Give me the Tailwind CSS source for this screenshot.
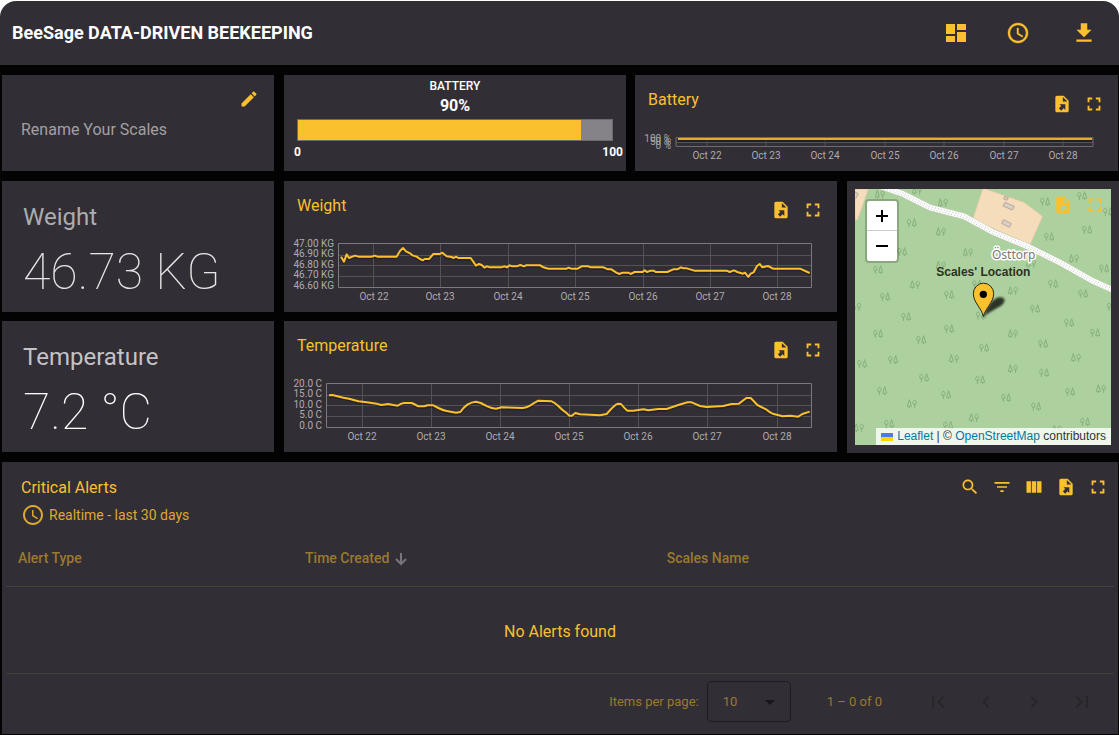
<!DOCTYPE html>
<html lang="en">
<head>
<meta charset="utf-8">
<meta name="viewport" content="width=device-width, initial-scale=1">
<title>BeeSage</title>
<script src="https://cdn.jsdelivr.net/npm/@tailwindcss/browser@4"></script>
</head>
<body class="bg-[#030303] font-['Roboto',sans-serif] text-white">
<svg class="hidden" aria-hidden="true">
  <symbol id="file" viewBox="0 0 24 24"><path d="M6,2C4.89,2 4,2.9 4,4V20A2,2 0 0,0 6,22H18A2,2 0 0,0 20,20V8L14,2M13,3.5L18.5,9H13M8.93,12.22H16V19.29L13.88,17.17L11.05,20L8.22,17.17L11.05,14.35"/></symbol>
  <symbol id="full" viewBox="0 0 24 24"><path d="M7 14H5v5h5v-2H7v-3zm-2-4h2V7h3V5H5v5zm12 7h-3v2h5v-5h-2v3zM14 5v2h3v3h2V5h-5z"/></symbol>
  <symbol id="clock" viewBox="0 0 24 24"><path d="M11.99 2C6.47 2 2 6.48 2 12s4.47 10 9.99 10C17.52 22 22 17.52 22 12S17.52 2 11.99 2zM12 20c-4.42 0-8-3.58-8-8s3.58-8 8-8 8 3.58 8 8-3.58 8-8 8zm.5-13H11v6l5.250 3.150.75-1.230-4.500-2.670z"/></symbol>
  <defs>
    <path id="ta" d="M-8 13V0M-8 4a5 7 0 1 1 .1 0M8 13V8M2 8 8-12 14 8Z"/>
    <path id="tb" d="M8 13V0M8 4a5 7 0 1 1 .1 0M-8 13V8M-14 8-8-12-2 8Z"/>
  </defs>
</svg>

<header class="bg-white pt-px">
  <div class="flex h-16 items-center justify-between rounded-t-2xl bg-[#322e35] pr-[15px] pl-3">
    <h1 class="text-lg font-bold">BeeSage DATA-DRIVEN BEEKEEPING</h1>
    <div class="flex items-center text-[#fbc02d]">
      <button type="button" aria-label="Dashboards" class="mr-[22px] grid size-10 place-items-center"><svg class="size-6 fill-current" viewBox="0 0 24 24"><path d="M2 13h9V3H2v10zm0 8h9v-6H2v6zm11 0h9V11h-9v10zm0-18v6h9V3h-9z"/></svg></button>
      <button type="button" aria-label="Time window" class="mr-[26px] grid size-10 place-items-center"><svg class="size-6 fill-current stroke-current" stroke-width=".4"><use href="#clock"/></svg></button>
      <button type="button" aria-label="Download" class="grid size-10 place-items-center"><svg class="size-[26px] fill-current" viewBox="0 0 24 24"><path d="M19 9h-4V3H9v6H5l7 7 7-7zM5 18v2h14v-2H5z"/></svg></button>
    </div>
  </div>
</header>

<main class="flex flex-col gap-[10px] pt-[10px] pl-[2px]">
  <div class="mr-px grid grid-cols-[272fr_342fr_482fr] gap-[10px]">
    <section class="flex min-h-24 flex-col bg-[#322e35] px-[19px]">
      <button type="button" aria-label="Rename" class="mt-[14px] -mr-[4px] self-end p-0 text-[#fbc02d]"><svg class="size-5 fill-current" viewBox="0 0 24 24"><path d="M3 17.250V21h3.750L17.810 9.940l-3.750-3.750L3 17.250zM20.710 7.040c.39-.39.39-1.020 0-1.410l-2.340-2.340c-.39-.39-1.020-.39-1.410 0l-1.830 1.830 3.750 3.750 1.830-1.830z"/></svg></button>
      <p class="mt-[9px] text-base leading-6 text-[#a1a0a2]">Rename Your Scales</p>
    </section>
    <section class="bg-[#322e35] px-[13px] pt-[3px] text-center">
      <h2 class="text-xs leading-4 font-medium">BATTERY</h2>
      <p class="text-base leading-6 font-bold">90%</p>
      <div class="mt-px h-[22px] border border-[#6c6a6e] bg-[#858387]"><div class="h-full bg-[#fbc02d]" style="width:90%"></div></div>
      <div class="-mx-[10px] mt-[3px] flex justify-between pl-[7px] text-xs leading-4 font-bold"><span>0</span><span>100</span></div>
    </section>
    <section class="-ml-px bg-[#322e35]">
      <div class="flex h-[50px] justify-between pr-2 pl-[13px] text-[#fbc02d]">
        <h2 class="mt-[13px] text-base leading-6">Battery</h2>
        <div class="mt-[13px] flex">
          <button type="button" aria-label="Export" class="grid size-8 place-items-center"><svg class="size-5 fill-current"><use href="#file"/></svg></button>
          <button type="button" aria-label="Fullscreen" class="grid size-8 place-items-center"><svg class="size-[22px] fill-current"><use href="#full"/></svg></button>
        </div>
      </div>
      <svg class="block w-full text-[10px]" viewBox="0 0 483 45">
        <path fill="none" stroke="#545157" d="M72 13v9M131 13v9M190 13v9M250 13v9M309 13v9M369 13v9M428 13v9M41 17.500H458"/>
        <path fill="none" stroke="#6d6b70" d="M41 12.500H458V21.500H41Z"/>
        <path fill="none" stroke="#000" stroke-opacity=".3" stroke-width="2" d="M43 16H457"/>
        <path fill="none" stroke="#e0ad30" stroke-width="2" d="M43 14H457"/>
        <g fill="#a4a3a5" text-anchor="end"><text x="36" y="17">100 %</text><text x="36" y="20">50 %</text><text x="36" y="24">0 %</text></g>
        <g fill="#adacae" text-anchor="middle"><text x="72" y="34">Oct 22</text><text x="131" y="34">Oct 23</text><text x="190" y="34">Oct 24</text><text x="250" y="34">Oct 25</text><text x="309" y="34">Oct 26</text><text x="369" y="34">Oct 27</text><text x="428" y="34">Oct 28</text></g>
      </svg>
    </section>
  </div>

  <div class="grid grid-cols-[272fr_553fr_272fr] items-start gap-[10px]">
    <div class="flex flex-col gap-[9px]">
      <section class="min-h-[131px] bg-[#322e35] px-[21px] pt-5">
        <h2 class="text-2xl leading-8 text-[#adacae]">Weight</h2>
        <p class="mt-[9px] text-[50px] leading-[60px] font-thin text-[#e6e6e6]">46.73 KG</p>
      </section>
      <section class="min-h-[131px] bg-[#322e35] px-[21px] pt-5">
        <h2 class="text-2xl leading-8 text-[#c4c3c5]">Temperature</h2>
        <p class="mt-[9px] text-[50px] leading-[60px] font-thin">7.2 °C</p>
      </section>
    </div>

    <div class="flex flex-col gap-[9px]">
      <section class="bg-[#322e35]">
        <div class="flex h-[50px] justify-between pr-2 pl-[13px] text-[#fbc02d]">
          <h2 class="mt-[13px] text-base leading-6">Weight</h2>
          <div class="mt-[13px] flex">
            <button type="button" aria-label="Export" class="grid size-8 place-items-center"><svg class="size-5 fill-current"><use href="#file"/></svg></button>
            <button type="button" aria-label="Fullscreen" class="grid size-8 place-items-center"><svg class="size-[22px] fill-current"><use href="#full"/></svg></button>
          </div>
        </div>
        <svg class="block w-full text-[10px]" viewBox="0 0 553 81">
          <path fill="none" stroke="#545157" d="M54 24.500H528M54 34.500H528M54 45.500H528M89.500 12V56M156.500 12V56M224.500 12V56M291.500 12V56M359.500 12V56M426.500 12V56M493.500 12V56"/>
          <path fill="none" stroke="#7b797e" d="M54.500 12.500H527.500V56.500H54.500Z"/>
          <defs><path id="wl" d="M183 242L192 257L200 235L207 246L225 239L235 242H276L284 239L292 242H350L360 225L369 216L378 226L390 232L397 238L410 242L420 249L428 253L434 249H447L460 234H480L487 230L500 241L515 243L521 246L528 242L535 246H572L588 269L597 264L605 267L613 275L621 271L629 274H664L673 271L681 274L689 268L697 271H710L721 267L732 271L738 268H781L790 274L805 278H860L866 275L873 278H893L905 271H925L932 274H970L984 280H994L1009 290L1018 294L1028 290H1045L1052 294L1064 288H1088L1094 283L1101 288L1112 284H1121L1127 288H1162L1180 280H1192L1203 274L1210 277H1220L1243 284H1340L1349 288L1362 283L1372 288L1389 293L1395 290L1405 303L1412 293L1421 289L1431 270L1439 264L1447 274L1464 270L1479 278H1560L1589 291"/></defs>
          <g transform="translate(-4 -55) scale(.33333)" fill="none" stroke-linejoin="round" stroke-width="6">
            <use href="#wl" y="5" stroke="#000" stroke-opacity=".25"/><use href="#wl" stroke="#fbc02d"/>
          </g>
          <g fill="#adacae" text-anchor="end"><text x="50" y="16">47.00 KG</text><text x="50" y="26">46.90 KG</text><text x="50" y="37">46.80 KG</text><text x="50" y="47">46.70 KG</text><text x="50" y="58">46.60 KG</text></g>
          <g fill="#adacae" text-anchor="middle"><text x="90" y="69">Oct 22</text><text x="156" y="69">Oct 23</text><text x="224" y="69">Oct 24</text><text x="291" y="69">Oct 25</text><text x="359" y="69">Oct 26</text><text x="426" y="69">Oct 27</text><text x="493" y="69">Oct 28</text></g>
        </svg>
      </section>
      <section class="bg-[#322e35]">
        <div class="flex h-[50px] justify-between pr-2 pl-[13px] text-[#fbc02d]">
          <h2 class="mt-[13px] text-base leading-6">Temperature</h2>
          <div class="mt-[13px] flex">
            <button type="button" aria-label="Export" class="grid size-8 place-items-center"><svg class="size-5 fill-current"><use href="#file"/></svg></button>
            <button type="button" aria-label="Fullscreen" class="grid size-8 place-items-center"><svg class="size-[22px] fill-current"><use href="#full"/></svg></button>
          </div>
        </div>
        <svg class="block w-full text-[10px]" viewBox="0 0 553 81">
          <path fill="none" stroke="#545157" d="M43 24.500H528M43 34.500H528M43 45.500H528M78.500 12V56M147.500 12V56M216.500 12V56M285.500 12V56M354.500 12V56M423.500 12V56M493.500 12V56"/>
          <path fill="none" stroke="#7b797e" d="M42.500 12.500H527.500V56.500H42.500Z"/>
          <defs><path id="tl" d="M147 238L157 237L190 245L207 248L235 256L260 259L290 263L303 267L325 264L340 267L353 269Q362 262 372 261H395Q405 265 415 271L432 271L443 268H460L475 276Q488 283 500 285L528 290L541 288Q550 275 562 266Q575 258 588 257L602 261L622 271Q635 277 648 278L665 274L728 276Q740 275 750 269Q764 260 775 254L815 256Q825 260 835 270Q846 282 857 289L868 299H876L886 291L900 295L960 298L980 294Q992 280 1002 271Q1008 264 1014 263L1023 264Q1032 276 1042 284L1060 284L1090 280L1105 283L1135 279H1160L1195 267L1223 259H1235L1260 270L1280 273L1330 270L1355 264L1377 263L1399 246H1412Q1422 256 1432 267L1458 280Q1468 289 1478 293L1508 301L1530 299L1555 302L1567 294L1589 287"/></defs>
          <g transform="translate(-4 -55) scale(.33333)" fill="none" stroke-linejoin="round" stroke-width="6">
            <use href="#tl" y="5" stroke="#000" stroke-opacity=".25"/><use href="#tl" stroke="#fbc02d"/>
          </g>
          <g fill="#adacae" text-anchor="end"><text x="38" y="16">20.0 C</text><text x="38" y="26">15.0 C</text><text x="38" y="37">10.0 C</text><text x="38" y="47">5.0 C</text><text x="38" y="58">0.0 C</text></g>
          <g fill="#adacae" text-anchor="middle"><text x="78" y="69">Oct 22</text><text x="147" y="69">Oct 23</text><text x="216" y="69">Oct 24</text><text x="285" y="69">Oct 25</text><text x="354" y="69">Oct 26</text><text x="423" y="69">Oct 27</text><text x="493" y="69">Oct 28</text></g>
        </svg>
      </section>
    </div>

    <section class="relative bg-[#322e35] p-2 font-['Liberation_Sans',sans-serif]" aria-label="Map">
      <svg class="block w-full" viewBox="36 39 768 768">
        <path fill="#add19e" d="M36 39h768v768H36z"/>
        <g fill="none" stroke="#86b07c" stroke-width="3">
          <use href="#tb" x="111" y="55"/><use href="#tb" x="222" y="43"/><use href="#tb" x="300" y="80"/><use href="#ta" x="206" y="140"/><use href="#tb" x="294" y="167"/><use href="#ta" x="177" y="227"/><use href="#tb" x="375" y="229"/><use href="#ta" x="606" y="77"/><use href="#ta" x="717" y="59"/><use href="#ta" x="732" y="161"/><use href="#ta" x="618" y="182"/><use href="#tb" x="693" y="248"/><use href="#ta" x="783" y="277"/><use href="#ta" x="795" y="107"/><use href="#ta" x="630" y="323"/><use href="#ta" x="720" y="353"/><use href="#tb" x="510" y="344"/><use href="#tb" x="216" y="326"/><use href="#ta" x="105" y="281"/><use href="#tb" x="294" y="268"/><use href="#ta" x="318" y="356"/><use href="#ta" x="126" y="362"/><use href="#tb" x="40" y="392"/><use href="#ta" x="189" y="422"/><use href="#ta" x="576" y="398"/><use href="#ta" x="678" y="440"/><use href="#ta" x="756" y="470"/><use href="#ta" x="105" y="473"/><use href="#ta" x="318" y="458"/><use href="#ta" x="234" y="491"/><use href="#tb" x="510" y="473"/><use href="#ta" x="600" y="503"/><use href="#ta" x="423" y="515"/><use href="#ta" x="150" y="551"/><use href="#tb" x="333" y="548"/><use href="#ta" x="57" y="563"/><use href="#tb" x="699" y="545"/><use href="#tb" x="510" y="578"/><use href="#ta" x="603" y="590"/><use href="#ta" x="243" y="605"/><use href="#ta" x="411" y="611"/><use href="#ta" x="117" y="644"/><use href="#ta" x="309" y="656"/><use href="#tb" x="774" y="638"/><use href="#ta" x="681" y="647"/><use href="#ta" x="489" y="665"/><use href="#ta" x="579" y="691"/><use href="#tb" x="207" y="683"/><use href="#tb" x="393" y="725"/><use href="#ta" x="726" y="737"/><use href="#ta" x="138" y="743"/><use href="#ta" x="315" y="748"/><use href="#tb" x="48" y="755"/><use href="#ta" x="402" y="324"/><use href="#ta" x="413" y="418"/><use href="#tb" x="642" y="760"/><use href="#tb" x="564" y="262"/><use href="#ta" x="806" y="392"/>
        </g>
        <path fill="#f5dcba" stroke="#dfc5a3" stroke-width="2" d="M420 36L543 79L599 121L561 207L389 130ZM36 39H76L44 131H36Z"/>
        <g fill="#d9cfc9" stroke="#b9a99c" stroke-width="3"><path d="M486 79L514 91L508 102L480 90ZM482 131L505 143L499 154L476 142ZM485 61L496 65L492 73L482 69ZM36 48L46 53L38 68"/></g>
        <path fill="none" stroke="#c5cdbd" stroke-width="19" d="M110 30L180 54L262 95L363 121L447 167L557 213L650 259L750 315L810 342"/>
        <path fill="none" stroke="#fff" stroke-width="16" d="M110 30L180 54L262 95L363 121L447 167L557 213L650 259L750 315L810 342"/>
        <g fill="none" stroke="#c0c0c0" stroke-width="3" stroke-dasharray="3 6"><path d="M110 27L180 51L262 92L363 118L447 164L557 210L650 256L750 312L810 339"/><path stroke-dashoffset="4" d="M110 34L180 58L262 99L363 125L447 171L557 217L650 263L750 319L810 346"/></g>
        <text x="512" y="249" text-anchor="middle" class="font-['Noto_Sans']" font-size="36" fill="#777" stroke="#fff" stroke-width="9" stroke-linejoin="round" paint-order="stroke">Östtorp</text>
        <defs><filter id="soft" x="-30%" y="-30%" width="160%" height="160%"><feGaussianBlur stdDeviation="3"/></filter></defs>
        <path fill="#000" fill-opacity=".75" filter="url(#soft)" d="M421 424C432 390 448 369 468 364C486 361 490 374 478 386C466 397 440 404 421 424Z"/>
        <path fill="#fbc02d" stroke="#2b2617" stroke-width="3" d="M421 422C417 397 391 380 391 353A30 31 0 0 1 452 353C452 380 426 397 421 422Z"/>
        <circle cx="421" cy="355" r="11"/>
        <text x="421" y="300" text-anchor="middle" font-size="36" font-weight="700" fill="#2a3226">Scales' Location</text>
      </svg>
      <div class="absolute top-[18px] left-[18px] flex flex-col rounded-[4px] border-2 border-black/20 bg-white bg-clip-padding text-black">
        <button type="button" aria-label="Zoom in" class="grid h-[30px] w-[30px] place-items-center border-b border-[#ccc]"><svg class="size-3" viewBox="0 0 12 12"><path stroke="#000" stroke-width="2" d="M6 0v12M0 6h12"/></svg></button>
        <button type="button" aria-label="Zoom out" class="grid h-[30px] w-[30px] place-items-center"><svg class="size-3" viewBox="0 0 12 12"><path stroke="#000" stroke-width="2" d="M0 6h12"/></svg></button>
      </div>
      <div class="absolute top-2 right-2 flex text-[#fbc02d]">
        <button type="button" aria-label="Export" class="grid size-8 place-items-center"><svg class="size-5 fill-current"><use href="#file"/></svg></button>
        <button type="button" aria-label="Fullscreen" class="grid size-8 place-items-center"><svg class="size-[22px] fill-current"><use href="#full"/></svg></button>
      </div>
      <p class="absolute right-2 bottom-2 flex items-center bg-white/80 px-[5px] text-xs leading-[17px] whitespace-pre text-[#333]"><svg class="mr-1 h-2 w-3" viewBox="0 0 12 8"><path fill="#4c7be1" d="M0 0h12v4H0z"/><path fill="#ffd500" d="M0 4h12v4H0z"/></svg><a href="#" class="text-[#0078a8]">Leaflet</a> | © <a href="#" class="text-[#0078a8]">OpenStreetMap</a> contributors</p>
    </section>
  </div>

  <section class="-mt-px mr-px mb-px bg-[#322e35]">
    <div class="flex justify-between pt-[9px] pr-1 pl-[19px] text-[#fbc02d]">
      <div class="pt-[5px]">
        <h2 class="text-base leading-6">Critical Alerts</h2>
        <button type="button" class="mt-[3px] flex items-center gap-1 text-sm leading-6 text-[#dba92e]"><svg class="size-6 fill-current"><use href="#clock"/></svg>Realtime - last 30 days</button>
      </div>
      <div class="flex">
        <button type="button" aria-label="Search" class="grid size-8 place-items-center"><svg class="size-5 fill-current" viewBox="0 0 24 24"><path d="M15.500 14h-.79l-.28-.27C15.410 12.590 16 11.110 16 9.500 16 5.910 13.090 3 9.500 3S3 5.910 3 9.500 5.910 16 9.500 16c1.610 0 3.090-.59 4.230-1.570l.27.28v.79l5 4.990L20.490 19l-4.990-5zm-6 0C7.010 14 5 11.990 5 9.500S7.010 5 9.500 5 14 7.010 14 9.500 11.990 14 9.500 14z"/></svg></button>
        <button type="button" aria-label="Filter" class="grid size-8 place-items-center"><svg class="size-5 fill-current" viewBox="0 0 24 24"><path d="M10 18h4v-2h-4v2zM3 6v2h18V6H3zm3 7h12v-2H6v2z"/></svg></button>
        <button type="button" aria-label="Columns" class="grid size-8 place-items-center"><svg class="size-5 fill-current" viewBox="0 0 24 24"><path d="M3 5h5.300v14H3zM9.300 5h5.400v14H9.300zM15.700 5H21v14h-5.300z"/></svg></button>
        <button type="button" aria-label="Export" class="grid size-8 place-items-center"><svg class="size-5 fill-current"><use href="#file"/></svg></button>
        <button type="button" aria-label="Fullscreen" class="grid size-8 place-items-center"><svg class="size-[22px] fill-current"><use href="#full"/></svg></button>
      </div>
    </div>
    <div class="mx-1 pt-[3px]">
      <table class="w-full table-fixed text-left text-sm">
        <thead><tr class="h-14 border-b border-[#4a3f35] text-[#997a30]">
          <th class="w-[26%] pl-3 font-medium">Alert Type</th>
          <th class="w-[33%] pl-[11px] font-medium" aria-sort="descending"><span class="flex items-center gap-1">Time Created <svg class="mt-[2px] size-4" viewBox="0 0 16 16"><path fill="none" stroke="#78767a" stroke-width="2" d="M8 2v11M3 8l5 5 5-5"/></svg></span></th>
          <th class="pl-[7px] font-medium">Scales Name</th>
        </tr></thead>
        <tbody><tr class="h-[87px] border-b border-[#433c3d]"><td colspan="3" class="pt-1 text-center text-base text-[#fbc02d]">No Alerts found</td></tr></tbody>
      </table>
      <div class="flex h-[60px] items-center justify-end pr-2 pb-1 text-[13px] text-[#997a30]">
        <label for="size" class="mr-2">Items per page:</label>
        <div class="relative mr-9">
          <select id="size" class="block h-[41px] w-[84px] appearance-none rounded-[4px] border border-[#1e1b20] bg-transparent pl-[15px] text-[13px]"><option>10</option></select>
          <svg class="pointer-events-none absolute top-[19px] right-4 h-[5px] w-[10px]" viewBox="0 0 10 5"><path fill="#18161a" d="M0 0h10L5 5z"/></svg>
        </div>
        <span class="mr-8">1 – 0 of 0</span>
        <button type="button" disabled aria-label="First page" class="grid size-12 place-items-center"><svg class="size-6 fill-[#28252b]" viewBox="0 0 24 24"><path d="M18.410 16.590L13.820 12l4.590-4.590L17 6l-6 6 6 6zM6 6h2v12H6z"/></svg></button>
        <button type="button" disabled aria-label="Previous page" class="grid size-12 place-items-center"><svg class="size-6 fill-[#28252b]" viewBox="0 0 24 24"><path d="M15.410 7.410L14 6l-6 6 6 6 1.410-1.410L10.830 12z"/></svg></button>
        <button type="button" disabled aria-label="Next page" class="grid size-12 place-items-center"><svg class="size-6 fill-[#28252b]" viewBox="0 0 24 24"><path d="M10 6L8.590 7.410 13.170 12l-4.580 4.590L10 18l6-6z"/></svg></button>
        <button type="button" disabled aria-label="Last page" class="grid size-12 place-items-center"><svg class="size-6 fill-[#28252b]" viewBox="0 0 24 24"><path d="M5.590 7.410L10.180 12l-4.590 4.590L7 18l6-6-6-6zM16 6h2v12h-2z"/></svg></button>
      </div>
    </div>
  </section>
</main>
</body>
</html>
